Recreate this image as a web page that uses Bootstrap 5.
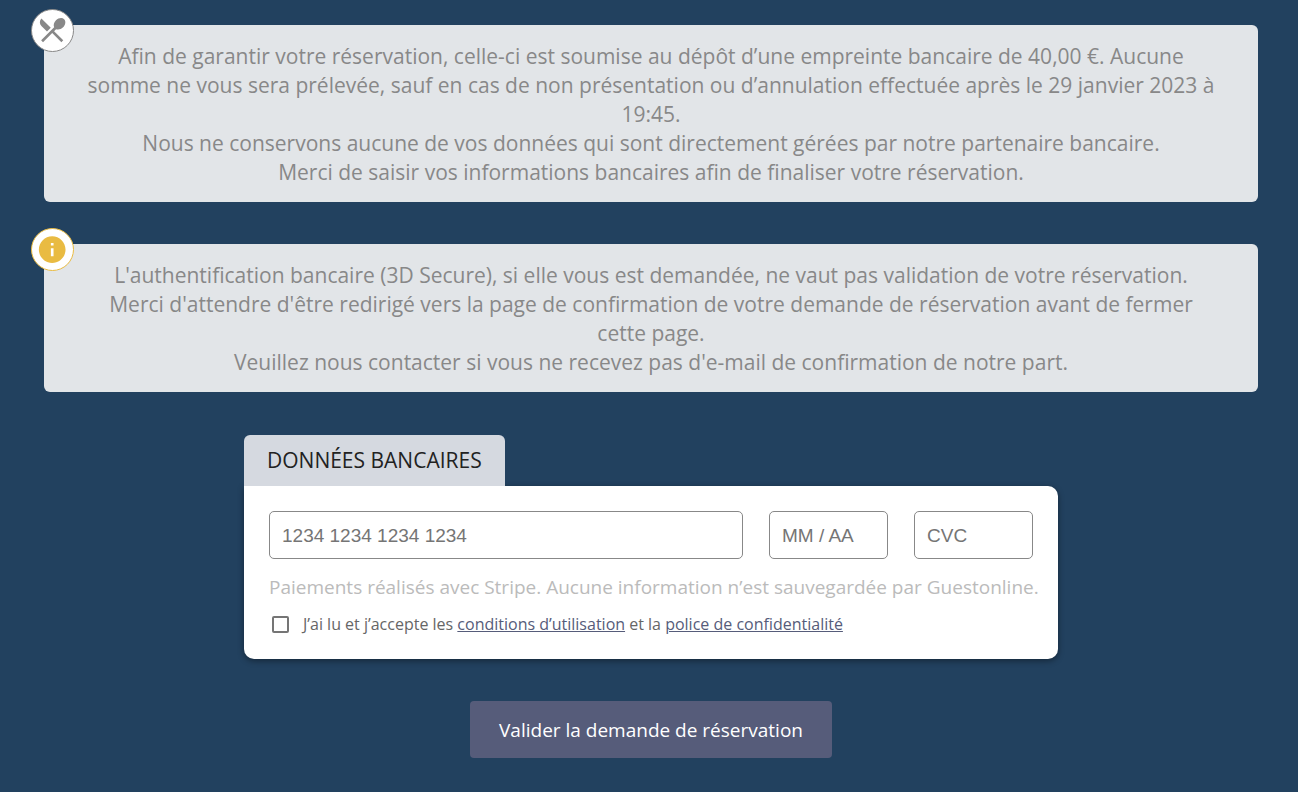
<!DOCTYPE html>
<html lang="fr">
<head>
<meta charset="utf-8">
<meta name="viewport" content="width=device-width, initial-scale=1">
<title>Réservation – Données bancaires</title>
<link href="https://cdn.jsdelivr.net/npm/bootstrap@5.3.0/dist/css/bootstrap.min.css" rel="stylesheet">
<style>
body { background: #22415f; font-family: "Open Sans", "Noto Sans", sans-serif; }
.page-wrap { padding: 25px 40px 34px 44px; }
.notice { background: #e2e5e8; color: #888; border-radius: 6px; font-size: 21px; line-height: 29px; padding: 17px 40px 15px; margin-bottom: 42px; }
.notice-icon { width: 43px; height: 43px; top: -16px; left: -13px; background: #fff; border: 1px solid #888; }
.notice-icon.info { border-color: #e9bb42; }
.payment { max-width: 814px; }
.payment-title { background: #d5d9e0; color: #222; border-radius: 6px 6px 0 0; font-size: 21px; line-height: 29px; padding: 11px 23px; margin: 1px 0 0; }
.payment-card { border-radius: 0 10px 10px 10px; padding: 25px 25px 23px; box-shadow: 0 2px 6px rgba(0,0,0,.4); }
.payment-fields { gap: 26px; }
.payment-fields .form-control { height: 48px; border: 1px solid #888; border-radius: 5px; padding: 2px 12px 0; font-family: "Liberation Sans", Arial, sans-serif; font-size: 19px; }
.form-control::placeholder { color: #757575; }
.short-field { width: 119px; }
.stripe-note { color: #bbb; font-size: 19px; line-height: 26px; margin: 15px 0 12px; }
@media (min-width: 900px) { .stripe-note { white-space: nowrap; } }
.terms { color: #666; font-size: 16px; line-height: 24px; gap: 14px; padding-left: 3px; }
.terms a { color: #565c7a; }
.terms .form-check-input { width: 17px; height: 17px; border: 2px solid #757575; border-radius: 2px; }
.submit-btn { background: #565c7a; color: #fff; border-radius: 4px; font-size: 19px; line-height: 27px; padding: 16px 29px 14px; margin-top: 42px; border: 0; }
.submit-btn:hover { background: #666c8a; color: #fff; }
</style>
</head>
<body>
<main class="page-wrap">
  <section class="notice position-relative text-center">
    <span class="notice-icon position-absolute rounded-circle d-flex align-items-center justify-content-center">
      <svg width="32" height="32" viewBox="0.6 0.9 24 24" fill="#888" aria-hidden="true"><path d="M8.1 13.34l2.83-2.83L3.91 3.5c-1.56 1.56-1.56 4.09 0 5.66l4.19 4.18zm6.78-1.81c1.53.71 3.68.21 5.27-1.38 1.91-1.91 2.28-4.65.81-6.12-1.46-1.46-4.2-1.1-6.12.81-1.59 1.59-2.09 3.74-1.38 5.27L3.7 19.87l1.41 1.41L12 14.41l6.88 6.88 1.41-1.41L13.41 13l1.47-1.47z"/></svg>
    </span>
    Afin de garantir votre réservation, celle-ci est soumise au dépôt d’une empreinte bancaire de 40,00 €. Aucune somme ne vous sera prélevée, sauf en cas de non présentation ou d’annulation effectuée après le 29 janvier 2023 à 19:45.<br>
    Nous ne conservons aucune de vos données qui sont directement gérées par notre partenaire bancaire.<br>
    Merci de saisir vos informations bancaires afin de finaliser votre réservation.
  </section>

  <section class="notice position-relative text-center">
    <span class="notice-icon info position-absolute rounded-circle d-flex align-items-center justify-content-center">
      <svg width="32" height="32" viewBox="0.6 0.3 24 24" fill="#e9bb42" aria-hidden="true"><path d="M12 2C6.48 2 2 6.48 2 12s4.48 10 10 10 10-4.48 10-10S17.52 2 12 2zm1 15h-2v-6h2v6zm0-8h-2V7h2v2z"/></svg>
    </span>
    L'authentification bancaire (3D Secure), si elle vous est demandée, ne vaut pas validation de votre réservation.<br>
    Merci d'attendre d'être redirigé vers la page de confirmation de votre demande de réservation avant de fermer cette page.<br>
    Veuillez nous contacter si vous ne recevez pas d'e-mail de confirmation de notre part.
  </section>

  <form class="payment mx-auto">
    <h2 class="payment-title d-inline-block align-top fw-normal">DONNÉES BANCAIRES</h2>
    <div class="payment-card bg-white">
      <div class="payment-fields d-flex">
        <input class="form-control flex-fill" type="text" placeholder="1234 1234 1234 1234" aria-label="Numéro de carte">
        <input class="form-control short-field flex-shrink-0" type="text" placeholder="MM / AA" aria-label="Date d’expiration">
        <input class="form-control short-field flex-shrink-0" type="text" placeholder="CVC" aria-label="CVC">
      </div>
      <p class="stripe-note">Paiements réalisés avec Stripe. Aucune information n’est sauvegardée par Guestonline.</p>
      <div class="terms d-flex align-items-center">
        <input class="form-check-input m-0 flex-shrink-0" type="checkbox" id="terms">
        <label for="terms">J’ai lu et j’accepte les <a href="#">conditions d’utilisation</a> et la <a href="#">police de confidentialité</a></label>
      </div>
    </div>
    <div class="text-center">
      <button class="submit-btn btn" type="submit">Valider la demande de réservation</button>
    </div>
  </form>
</main>
<script src="https://cdn.jsdelivr.net/npm/bootstrap@5.3.0/dist/js/bootstrap.bundle.min.js"></script>
</body>
</html>
